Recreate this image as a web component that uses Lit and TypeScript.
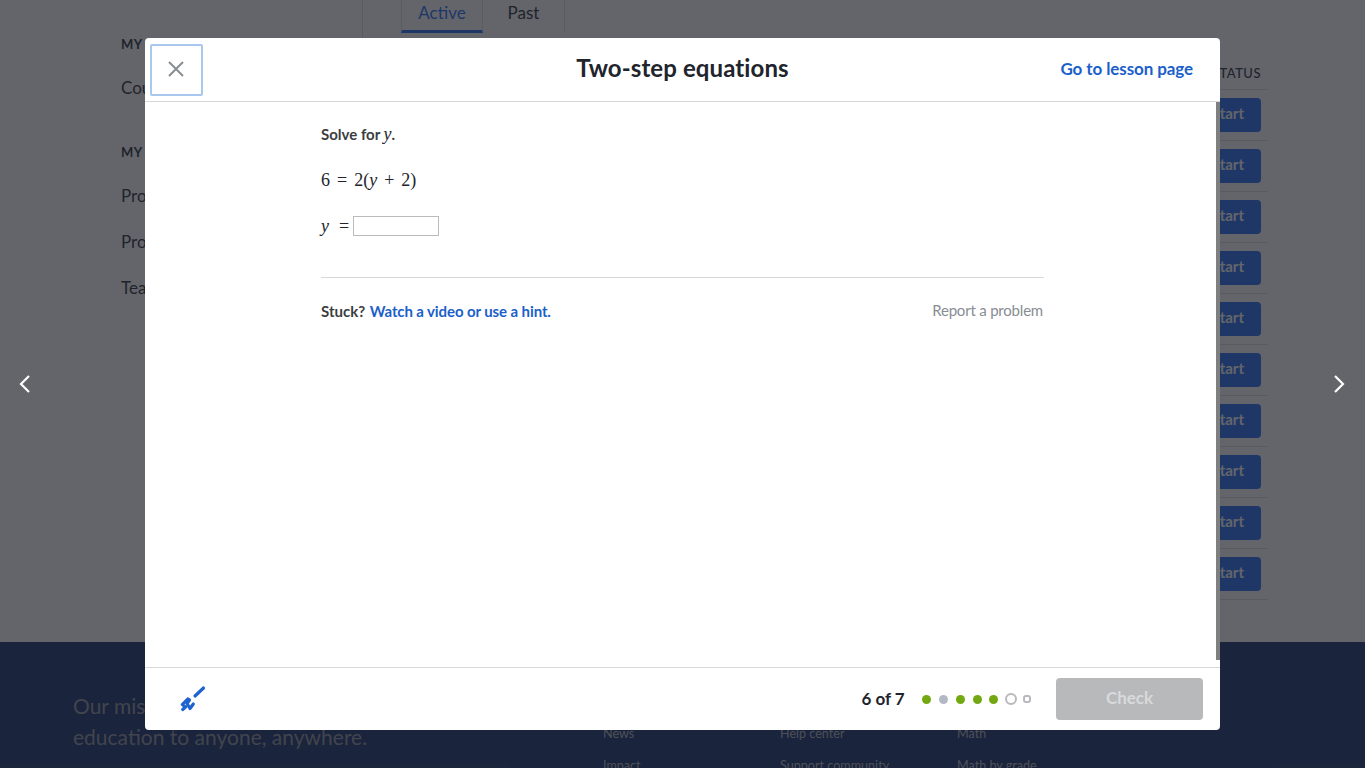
import { LitElement, html, css } from 'lit';
import { customElement } from 'lit/decorators.js';

const ROWS = Array.from({ length: 10 });

/** The page that sits dimmed behind the exercise dialog. */
@customElement('bg-page')
export class BgPage extends LitElement {
  static styles = css`
    :host {
      display: block;
      height: 768px;
      overflow: hidden;
      background: #fff;
      color: #21242c;
      font-family: Lato, sans-serif;
    }
    .top {
      height: 642px;
      display: flex;
      padding-left: 121px;
      box-sizing: border-box;
    }
    .side {
      width: 242px;
      flex: none;
      border-right: 1px solid #ddd;
      height: 330px;
      padding-top: 37px;
      box-sizing: border-box;
    }
    .side h4 {
      margin: 0;
      font-size: 13px;
      line-height: 15px;
      font-weight: 700;
      letter-spacing: 0.5px;
    }
    .side a {
      display: block;
      font-size: 17px;
      line-height: 20px;
      margin-top: 26px;
    }
    .side h4.second {
      margin-top: 47px;
    }
    .side h4.second + a {
      margin-top: 26px;
    }
    .main {
      flex: none;
      width: 905px;
      padding-left: 38px;
      box-sizing: border-box;
    }
    .tabs {
      display: flex;
      height: 33px;
    }
    .tab {
      width: 82px;
      text-align: center;
      font-size: 17px;
      line-height: 26px;
      box-sizing: border-box;
      border-right: 1px solid #ddd;
    }
    .tab.active {
      color: #1865f2;
      border-left: 1px solid #ddd;
      border-bottom: 3px solid #1865f2;
    }
    .head {
      height: 56px;
      display: flex;
      justify-content: flex-end;
      padding: 32px 7px 0 0;
      box-sizing: border-box;
      font-size: 13px;
      line-height: 16px;
      letter-spacing: 0.5px;
      font-weight: 500;
    }
    .row {
      height: 51px;
      box-sizing: border-box;
      border-top: 1px solid #ddd;
      display: flex;
      justify-content: flex-end;
      align-items: center;
      padding-right: 7px;
    }
    .row:last-child {
      border-bottom: 1px solid #ddd;
      height: 52px;
      padding-bottom: 1px;
    }
    .start {
      background: #1865f2;
      color: #fff;
      font-size: 15px;
      font-weight: 700;
      line-height: 31px;
      height: 34px;
      padding: 0 17px 0 60px;
      border-radius: 4px;
    }
    .foot {
      height: 126px;
      background: #0d2761;
      color: #8e909c;
      display: flex;
      padding: 48px 0 0 73px;
      box-sizing: border-box;
    }
    .mission {
      width: 530px;
      flex: none;
      font-size: 21px;
      line-height: 31px;
    }
    .col {
      width: 177px;
      flex: none;
      color: #b4b6c0;
      font-size: 12.6px;
      line-height: 32px;
      padding-top: 28px;
    }
  `;

  render() {
    return html`
      <div class="top">
        <div class="side">
          <h4>MY COURSES</h4>
          <a>Courses</a>
          <h4 class="second">MY ACCOUNT</h4>
          <a>Progress</a>
          <a>Profile</a>
          <a>Teachers</a>
        </div>
        <div class="main">
          <div class="tabs">
            <div class="tab active">Active</div>
            <div class="tab">Past</div>
          </div>
          <div class="head">STATUS</div>
          ${ROWS.map(() => html`<div class="row"><div class="start">Start</div></div>`)}
        </div>
      </div>
      <div class="foot">
        <div class="mission">Our mission is to provide a free, world-class<br />education to anyone, anywhere.</div>
        <div class="col">News<br />Impact</div>
        <div class="col">Help center<br />Support community</div>
        <div class="col">Math<br />Math by grade</div>
      </div>
    `;
  }
}

@customElement('app-root')
export class AppRoot extends LitElement {
  static styles = css`
    :host {
      display: block;
      position: relative;
      height: 768px;
      overflow: hidden;
      font-family: Lato, sans-serif;
    }
    .scrim {
      position: absolute;
      inset: 0;
      background: rgba(33, 36, 44, 0.7);
    }
    .arrow {
      position: absolute;
      top: 374px;
      width: 20px;
      height: 20px;
      fill: none;
      stroke: #fff;
      stroke-width: 2.2;
    }
    .arrow.prev {
      left: 15px;
    }
    .arrow.next {
      left: 1329px;
    }
    .dialog {
      position: absolute;
      left: 145px;
      top: 38px;
      width: 1075px;
      height: 692px;
      background: #fff;
      border-radius: 4px;
      display: flex;
      flex-direction: column;
      overflow: hidden;
      color: #21242c;
    }
    header {
      height: 64px;
      flex: none;
      box-sizing: border-box;
      border-bottom: 1px solid #d8d8da;
      display: grid;
      grid-template-columns: 1fr auto 1fr;
      align-items: center;
    }
    .close {
      width: 53px;
      height: 52px;
      margin: 6px 0 0 5px;
      align-self: start;
      box-sizing: border-box;
      border: 2px solid #a9c8f0;
      border-radius: 2px;
      padding: 0 1px 2px 0;
      display: flex;
      align-items: center;
      justify-content: center;
    }
    .close svg {
      width: 18px;
      height: 18px;
      stroke: #888d93;
      stroke-width: 2;
      fill: none;
    }
    h1 {
      margin: 0 0 4px;
      font-size: 24px;
      line-height: 30px;
      font-weight: 700;
      letter-spacing: 0.1px;
    }
    .lesson {
      justify-self: end;
      margin: 0 27px 2px 0;
      color: #1b5fca;
      font-size: 17px;
      font-weight: 700;
      letter-spacing: -0.1px;
    }
    .body {
      flex: 1;
      display: flex;
      justify-content: center;
      position: relative;
    }
    .scrollbar {
      position: absolute;
      right: 0;
      top: 0;
      width: 4px;
      height: 558px;
      background: #7f7f7f;
    }
    .exercise {
      width: 723px;
      box-sizing: border-box;
      padding-top: 23px;
    }
    .prompt {
      font-size: 15px;
      line-height: 18px;
      font-weight: 700;
      color: #3b3e40;
      height: 18px;
    }
    .math {
      font-family: 'Liberation Serif', serif;
      font-size: 18px;
      font-weight: 400;
      color: #21242c;
    }
    .math i {
      font-style: italic;
    }
    .eq {
      margin-top: 27px;
      line-height: 20px;
      height: 20px;
      word-spacing: 2.5px;
    }
    .answer {
      margin-top: 26px;
      display: flex;
      align-items: center;
      gap: 4px;
      height: 20px;
      word-spacing: 5.5px;
    }
    .answer b {
      display: block;
      width: 86px;
      height: 20px;
      box-sizing: border-box;
      border: 1px solid #bbb;
    }
    .rule {
      border-top: 1px solid #d8d8da;
      margin-top: 41px;
    }
    .help {
      margin-top: 22px;
      display: flex;
      align-items: center;
      justify-content: space-between;
      font-size: 15px;
      line-height: 20px;
    }
    .help b {
      font-weight: 700;
      color: #3b3e40;
    }
    .help b a {
      color: #1b5fca;
      margin-left: 1px;
      letter-spacing: -0.1px;
    }
    .help span {
      color: #888d93;
      font-size: 15px;
      letter-spacing: -0.2px;
      margin: 0 1px 2px 0;
    }
    footer {
      height: 63px;
      flex: none;
      box-sizing: border-box;
      border-top: 1px solid #d8d8da;
      display: flex;
      align-items: center;
      padding: 0 17px 0 31px;
    }
    .scratch {
      width: 32px;
      height: 32px;
      fill: none;
      stroke: #1f63d0;
      stroke-width: 3.2;
      stroke-linecap: round;
      stroke-linejoin: round;
    }
    .count {
      margin: 0 0 2px auto;
      font-size: 17px;
      font-weight: 700;
    }
    .dots {
      display: flex;
      align-items: center;
      gap: 7.8px;
      margin: 0 25px 0 17.5px;
    }
    .dot {
      width: 9px;
      height: 9px;
      border-radius: 50%;
      background: #74a813;
    }
    .dot.skip {
      background: #b4b8c4;
    }
    .dot.now {
      width: 12px;
      height: 12px;
      background: #fff;
      border: 2px solid #b8b9bc;
      box-sizing: border-box;
      margin: 0 -1.5px;
    }
    .dot.next {
      width: 8px;
      height: 8px;
      background: #fff;
      border: 2px solid #b8b9bc;
      box-sizing: border-box;
      border-radius: 3px;
    }
    .check {
      width: 147px;
      height: 42px;
      border-radius: 4px;
      background: #b8b9bb;
      color: #d9dadb;
      font-size: 17px;
      font-weight: 700;
      line-height: 40px;
      text-align: center;
    }
  `;

  render() {
    return html`
      <bg-page></bg-page>
      <div class="scrim"></div>
      <svg class="arrow prev" viewBox="0 0 20 20"><path d="M14 2 L6 10 L14 18" /></svg>
      <svg class="arrow next" viewBox="0 0 20 20"><path d="M6 2 L14 10 L6 18" /></svg>
      <div class="dialog">
        <header>
          <div class="close">
            <svg viewBox="0 0 18 18"><path d="M2 2 L16 16 M16 2 L2 16" /></svg>
          </div>
          <h1>Two-step equations</h1>
          <a class="lesson">Go to lesson page</a>
        </header>
        <div class="body">
          <div class="exercise">
            <div class="prompt">Solve for <span class="math"><i>y</i></span>.</div>
            <div class="math eq">6 = 2(<i>y</i> + 2)</div>
            <div class="math answer"><span><i>y</i> =</span><b></b></div>
            <div class="rule"></div>
            <div class="help">
              <b>Stuck? <a>Watch a video or use a hint.</a></b>
              <span>Report a problem</span>
            </div>
          </div>
          <div class="scrollbar"></div>
        </div>
        <footer>
          <svg class="scratch" viewBox="176 682.5 32 32">
            <path d="M195 695.5 L203.5 687.5" />
            <path d="M182.7 709 L185.5 706.5 L182.3 704 L187.7 698.5 L189.5 699.5 L187 703 L190 708 L193.3 703.5" />
          </svg>
          <div class="count">6 of 7</div>
          <div class="dots">
            <div class="dot"></div>
            <div class="dot skip"></div>
            <div class="dot"></div>
            <div class="dot"></div>
            <div class="dot"></div>
            <div class="dot now"></div>
            <div class="dot next"></div>
          </div>
          <div class="check">Check</div>
        </footer>
      </div>
    `;
  }
}
